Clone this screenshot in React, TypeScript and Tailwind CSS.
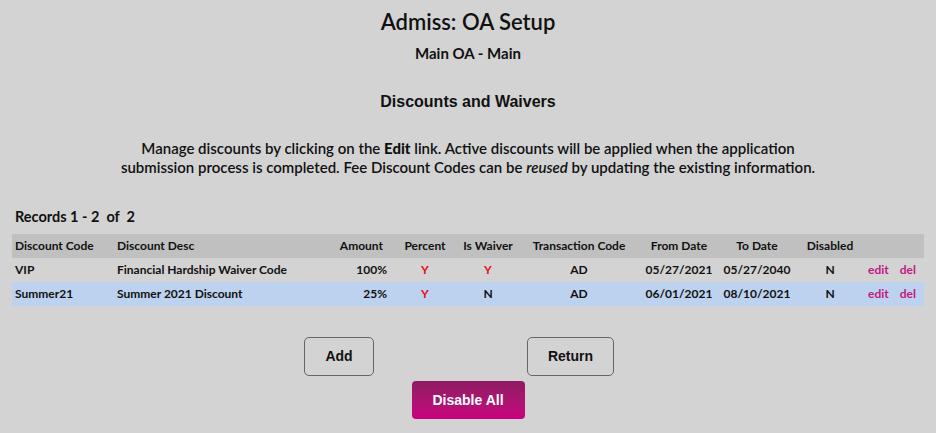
const rows = [
  {
    code: "VIP",
    desc: "Financial Hardship Waiver Code",
    amount: "100%",
    percent: "Y",
    waiver: "Y",
    trans: "AD",
    from: "05/27/2021",
    to: "05/27/2040",
    disabled: "N",
  },
  {
    code: "Summer21",
    desc: "Summer 2021 Discount",
    amount: "25%",
    percent: "Y",
    waiver: "N",
    trans: "AD",
    from: "06/01/2021",
    to: "08/10/2021",
    disabled: "N",
  },
];

function yn(v: string) {
  return v === "Y" ? "text-[#e8101a]" : "text-[#111]";
}

export default function App() {
  return (
    <div className="min-h-[433px] w-[936px] bg-[#d3d3d3] font-['Lato',sans-serif] text-[#111]">
      <div className="flex flex-col items-center pt-[8px]">
        <h1 className="text-[22px] font-semibold leading-[28px]">Admiss: OA Setup</h1>
        <div className="mt-[8px] text-[15px] font-bold leading-[18px]">Main OA - Main</div>
        <h2 className="mt-[30px] font-['Liberation_Sans',sans-serif] text-[16px] font-bold leading-[20px]">
          Discounts and Waivers
        </h2>
        <p className="mt-[27px] w-[712px] text-center text-[15px] font-semibold leading-[19px]">
          Manage discounts by clicking on the <b className="font-black">Edit</b> link. Active discounts will be applied when the
          application submission process is completed. Fee Discount Codes can be <i>reused</i> by updating the existing
          information.
        </p>
      </div>

      <div className="px-[12px] pt-[31px]">
        <div className="pl-[3px] text-[14.5px] font-bold leading-[18px]">Records 1 - 2&nbsp; of&nbsp; 2</div>
        <table className="mt-[8px] w-[912px] table-fixed border-collapse whitespace-nowrap text-[12px] font-bold">
          <colgroup>
            <col className="w-[100px]" />
            <col className="w-[218px]" />
            <col className="w-[58px]" />
            <col className="w-[74px]" />
            <col className="w-[52px]" />
            <col className="w-[130px]" />
            <col className="w-[70px]" />
            <col className="w-[86px]" />
            <col className="w-[60px]" />
            <col className="w-[64px]" />
          </colgroup>
          <thead>
            <tr className="h-[24px] bg-[#c0c0c0]">
              <th className="pl-[3px] text-left">Discount Code</th>
              <th className="pl-[5px] text-left">Discount Desc</th>
              <th className="pr-[5px] text-right">Amount</th>
              <th className="text-center">Percent</th>
              <th className="text-center">Is Waiver</th>
              <th className="text-center">Transaction Code</th>
              <th className="text-center">From Date</th>
              <th className="text-center">To Date</th>
              <th className="text-center">Disabled</th>
              <th />
            </tr>
          </thead>
          <tbody>
            {rows.map((r, i) => (
              <tr key={r.code} className={i === 1 ? "h-[24px] bg-[#bdd2ee]" : "h-[24px]"}>
                <td className="pl-[3px]">{r.code}</td>
                <td className="pl-[5px]">{r.desc}</td>
                <td className="pr-[1px] text-right">{r.amount}</td>
                <td className={"text-center " + yn(r.percent)}>{r.percent}</td>
                <td className={"text-center " + yn(r.waiver)}>{r.waiver}</td>
                <td className="text-center">{r.trans}</td>
                <td className="text-center">{r.from}</td>
                <td className="text-center">{r.to}</td>
                <td className="text-center">{r.disabled}</td>
                <td className="pl-[8px] text-[#c2187f]">
                  <span>edit</span>
                  <span className="ml-[11px]">del</span>
                </td>
              </tr>
            ))}
          </tbody>
        </table>
      </div>

      <div className="flex flex-col items-center pt-[31px] font-['Liberation_Sans',sans-serif] text-[14px] font-bold">
        <div className="mr-[18px] flex w-[310px] justify-between">
          <button className="h-[39px] w-[70px] rounded-[5px] border border-[#666] bg-transparent">Add</button>
          <button className="h-[39px] w-[87px] rounded-[5px] border border-[#666] bg-transparent">Return</button>
        </div>
        <button className="mt-[5px] h-[38px] w-[113px] rounded-[4px] bg-gradient-to-b from-[#8e1b62] to-[#c8007e] text-white">
          Disable All
        </button>
      </div>
    </div>
  );
}
